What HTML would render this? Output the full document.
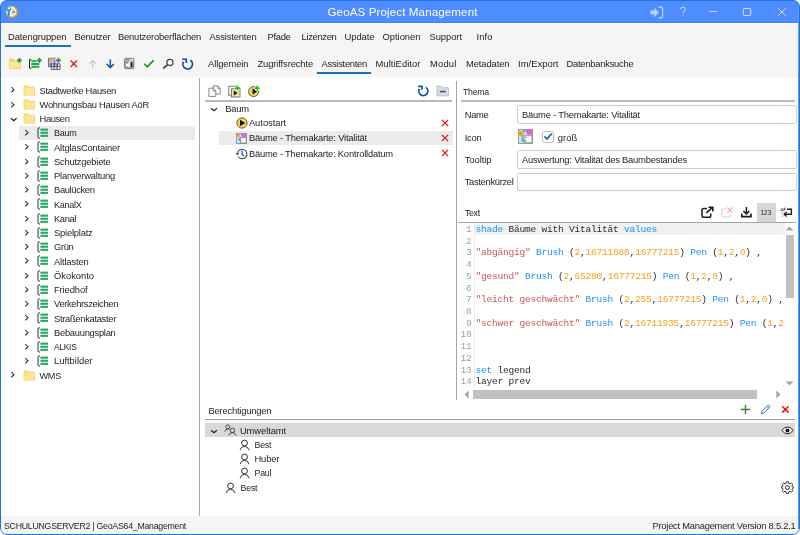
<!DOCTYPE html>
<html><head><meta charset="utf-8"><title>GeoAS Project Management</title>
<style>
html,body{margin:0;padding:0;background:#fff;}
body{width:800px;height:535px;overflow:hidden;position:relative;font-family:"Liberation Sans",sans-serif;}
#win{will-change:transform;position:absolute;left:0;top:0;width:800px;height:535px;border-radius:7px;background:#f5f5f5;overflow:hidden;}
#frame{position:absolute;left:0;top:0;width:798px;height:533px;border:1px solid #1f74dc;border-radius:7px;pointer-events:none;}
#title{position:absolute;left:0;top:0;width:800px;height:23px;background:#4f8cff;}
.a{position:absolute;display:block;}
.t{position:absolute;white-space:nowrap;line-height:16px;height:16px;font-family:"Liberation Sans",sans-serif;}
.p{position:absolute;background:#fff;}
.ln{position:absolute;background:#bdbdbd;}
.inp{position:absolute;left:517px;width:278px;height:16.5px;border:1px solid #cdcdcd;border-radius:1.5px;background:#fff;}
#code{position:absolute;left:458px;top:222px;width:340px;height:178px;background:#fff;font-family:"Liberation Mono",monospace;font-size:9.5px;letter-spacing:-0.2px;overflow:hidden;}
#code .r{position:absolute;left:0;width:327px;height:11.7px;line-height:11.7px;white-space:pre;}
#code .n{position:absolute;left:0;width:13.5px;text-align:right;color:#a2a2a2;}
#code .c{position:absolute;left:17.5px;color:#2b2b2b;}
.k{color:#1e8ff8}.s{color:#c9575d}.o{color:#f4a11c}
</style></head><body>
<div id="win">
<div id="title"></div>
<div class="a" style="left:0;top:22px;width:800px;height:1px;background:#3d84f4"></div>
<div class="a" style="left:0;top:23px;width:800px;height:1px;background:#fcfcfc"></div>
<!-- panels -->
<div class="p" style="left:1px;top:77px;width:797px;height:439px"></div>
<div class="ln" style="left:199px;top:78px;width:1px;height:438px;background:#a6a6a6"></div>
<div class="ln" style="left:456px;top:81px;width:1px;height:319px;background:#a6a6a6"></div>
<!-- selection bars -->
<div class="a" style="left:19px;top:126px;width:176px;height:14px;background:#ebebeb"></div>
<div class="a" style="left:219px;top:131px;width:233.5px;height:14px;background:#ebebeb"></div>
<div class="a" style="left:205px;top:423px;width:590px;height:14px;background:#d9d9d9"></div>
<!-- lines -->
<div class="ln" style="left:4.5px;top:45px;width:66px;height:1.6px;background:#1873b8"></div>
<div class="ln" style="left:317px;top:72px;width:54px;height:1.6px;background:#1873b8"></div>
<div class="ln" style="left:205px;top:100px;width:247px;height:1.8px;background:#b9b9b9"></div>
<div class="ln" style="left:461px;top:100px;width:334px;height:1.8px;background:#b9b9b9"></div>
<div class="ln" style="left:205px;top:418.9px;width:590px;height:1.3px;background:#a4a4a4"></div>
<!-- inputs -->
<div class="inp" style="top:105px"></div>
<div class="inp" style="top:150px"></div>
<div class="inp" style="top:172.5px"></div>
<svg class="a" style="left:9.8px;top:86.39999999999999px" width="6" height="8" viewBox="0 0 6 8"><path d="M1.3 1 L4 3.7 L1.3 6.4" fill="none" stroke="#262626" stroke-width="1.05"/></svg>
<svg class="a" style="left:23px;top:84.7px" width="13" height="11" viewBox="0 0 13 11"><path d="M0.6 1 Q0.6 0.4 1.2 0.4 H5 Q5.5 0.4 5.8 0.9 L6.3 1.8 H11.4 Q12 1.8 12 2.4 V10 Q12 10.6 11.4 10.6 H1.2 Q0.6 10.6 0.6 10 Z" fill="#f4d262"/><path d="M1.4 2.6 H11.2 V9.8 H1.4 Z" fill="#fce795"/><path d="M1.2 1.2 H5 V2 H1.2 Z" fill="#f9df82"/></svg>
<svg class="a" style="left:9.8px;top:100.64999999999999px" width="6" height="8" viewBox="0 0 6 8"><path d="M1.3 1 L4 3.7 L1.3 6.4" fill="none" stroke="#262626" stroke-width="1.05"/></svg>
<svg class="a" style="left:23px;top:98.95px" width="13" height="11" viewBox="0 0 13 11"><path d="M0.6 1 Q0.6 0.4 1.2 0.4 H5 Q5.5 0.4 5.8 0.9 L6.3 1.8 H11.4 Q12 1.8 12 2.4 V10 Q12 10.6 11.4 10.6 H1.2 Q0.6 10.6 0.6 10 Z" fill="#f4d262"/><path d="M1.4 2.6 H11.2 V9.8 H1.4 Z" fill="#fce795"/><path d="M1.2 1.2 H5 V2 H1.2 Z" fill="#f9df82"/></svg>
<svg class="a" style="left:9.6px;top:117.0px" width="8" height="6" viewBox="0 0 8 6"><path d="M1 1.2 L3.8 3.7 L6.6 1.2" fill="none" stroke="#1c1c1c" stroke-width="1.15"/></svg>
<svg class="a" style="left:23px;top:113.2px" width="13" height="11" viewBox="0 0 13 11"><path d="M0.6 1 Q0.6 0.4 1.2 0.4 H5 Q5.5 0.4 5.8 0.9 L6.3 1.8 H11.4 Q12 1.8 12 2.4 V10 Q12 10.6 11.4 10.6 H1.2 Q0.6 10.6 0.6 10 Z" fill="#f4d262"/><path d="M1.4 2.6 H11.2 V9.8 H1.4 Z" fill="#fce795"/><path d="M1.2 1.2 H5 V2 H1.2 Z" fill="#f9df82"/></svg>
<svg class="a" style="left:24.0px;top:129.15px" width="6" height="8" viewBox="0 0 6 8"><path d="M1.3 1 L4 3.7 L1.3 6.4" fill="none" stroke="#262626" stroke-width="1.05"/></svg>
<svg class="a" style="left:37.2px;top:127.05000000000001px" width="12" height="12" viewBox="0 0 12 12"><path d="M3 0.9 H2 Q1 0.9 1 1.9 V10 Q1 11 2 11 H3" fill="none" stroke="#333" stroke-width="1"/><rect x="3.4" y="1.6" width="7.6" height="2.1" fill="#25a868"/><rect x="3.4" y="4.7" width="7.6" height="2.1" fill="#25a868"/><rect x="3.4" y="7.8" width="7.6" height="2.1" fill="#25a868"/></svg>
<svg class="a" style="left:24.0px;top:143.4px" width="6" height="8" viewBox="0 0 6 8"><path d="M1.3 1 L4 3.7 L1.3 6.4" fill="none" stroke="#262626" stroke-width="1.05"/></svg>
<svg class="a" style="left:37.2px;top:141.3px" width="12" height="12" viewBox="0 0 12 12"><path d="M3 0.9 H2 Q1 0.9 1 1.9 V10 Q1 11 2 11 H3" fill="none" stroke="#333" stroke-width="1"/><rect x="3.4" y="1.6" width="7.6" height="2.1" fill="#25a868"/><rect x="3.4" y="4.7" width="7.6" height="2.1" fill="#25a868"/><rect x="3.4" y="7.8" width="7.6" height="2.1" fill="#25a868"/></svg>
<svg class="a" style="left:24.0px;top:157.65px" width="6" height="8" viewBox="0 0 6 8"><path d="M1.3 1 L4 3.7 L1.3 6.4" fill="none" stroke="#262626" stroke-width="1.05"/></svg>
<svg class="a" style="left:37.2px;top:155.55px" width="12" height="12" viewBox="0 0 12 12"><path d="M3 0.9 H2 Q1 0.9 1 1.9 V10 Q1 11 2 11 H3" fill="none" stroke="#333" stroke-width="1"/><rect x="3.4" y="1.6" width="7.6" height="2.1" fill="#25a868"/><rect x="3.4" y="4.7" width="7.6" height="2.1" fill="#25a868"/><rect x="3.4" y="7.8" width="7.6" height="2.1" fill="#25a868"/></svg>
<svg class="a" style="left:24.0px;top:171.9px" width="6" height="8" viewBox="0 0 6 8"><path d="M1.3 1 L4 3.7 L1.3 6.4" fill="none" stroke="#262626" stroke-width="1.05"/></svg>
<svg class="a" style="left:37.2px;top:169.8px" width="12" height="12" viewBox="0 0 12 12"><path d="M3 0.9 H2 Q1 0.9 1 1.9 V10 Q1 11 2 11 H3" fill="none" stroke="#333" stroke-width="1"/><rect x="3.4" y="1.6" width="7.6" height="2.1" fill="#25a868"/><rect x="3.4" y="4.7" width="7.6" height="2.1" fill="#25a868"/><rect x="3.4" y="7.8" width="7.6" height="2.1" fill="#25a868"/></svg>
<svg class="a" style="left:24.0px;top:186.15px" width="6" height="8" viewBox="0 0 6 8"><path d="M1.3 1 L4 3.7 L1.3 6.4" fill="none" stroke="#262626" stroke-width="1.05"/></svg>
<svg class="a" style="left:37.2px;top:184.05px" width="12" height="12" viewBox="0 0 12 12"><path d="M3 0.9 H2 Q1 0.9 1 1.9 V10 Q1 11 2 11 H3" fill="none" stroke="#333" stroke-width="1"/><rect x="3.4" y="1.6" width="7.6" height="2.1" fill="#25a868"/><rect x="3.4" y="4.7" width="7.6" height="2.1" fill="#25a868"/><rect x="3.4" y="7.8" width="7.6" height="2.1" fill="#25a868"/></svg>
<svg class="a" style="left:24.0px;top:200.4px" width="6" height="8" viewBox="0 0 6 8"><path d="M1.3 1 L4 3.7 L1.3 6.4" fill="none" stroke="#262626" stroke-width="1.05"/></svg>
<svg class="a" style="left:37.2px;top:198.3px" width="12" height="12" viewBox="0 0 12 12"><path d="M3 0.9 H2 Q1 0.9 1 1.9 V10 Q1 11 2 11 H3" fill="none" stroke="#333" stroke-width="1"/><rect x="3.4" y="1.6" width="7.6" height="2.1" fill="#25a868"/><rect x="3.4" y="4.7" width="7.6" height="2.1" fill="#25a868"/><rect x="3.4" y="7.8" width="7.6" height="2.1" fill="#25a868"/></svg>
<svg class="a" style="left:24.0px;top:214.65px" width="6" height="8" viewBox="0 0 6 8"><path d="M1.3 1 L4 3.7 L1.3 6.4" fill="none" stroke="#262626" stroke-width="1.05"/></svg>
<svg class="a" style="left:37.2px;top:212.55px" width="12" height="12" viewBox="0 0 12 12"><path d="M3 0.9 H2 Q1 0.9 1 1.9 V10 Q1 11 2 11 H3" fill="none" stroke="#333" stroke-width="1"/><rect x="3.4" y="1.6" width="7.6" height="2.1" fill="#25a868"/><rect x="3.4" y="4.7" width="7.6" height="2.1" fill="#25a868"/><rect x="3.4" y="7.8" width="7.6" height="2.1" fill="#25a868"/></svg>
<svg class="a" style="left:24.0px;top:228.9px" width="6" height="8" viewBox="0 0 6 8"><path d="M1.3 1 L4 3.7 L1.3 6.4" fill="none" stroke="#262626" stroke-width="1.05"/></svg>
<svg class="a" style="left:37.2px;top:226.8px" width="12" height="12" viewBox="0 0 12 12"><path d="M3 0.9 H2 Q1 0.9 1 1.9 V10 Q1 11 2 11 H3" fill="none" stroke="#333" stroke-width="1"/><rect x="3.4" y="1.6" width="7.6" height="2.1" fill="#25a868"/><rect x="3.4" y="4.7" width="7.6" height="2.1" fill="#25a868"/><rect x="3.4" y="7.8" width="7.6" height="2.1" fill="#25a868"/></svg>
<svg class="a" style="left:24.0px;top:243.15px" width="6" height="8" viewBox="0 0 6 8"><path d="M1.3 1 L4 3.7 L1.3 6.4" fill="none" stroke="#262626" stroke-width="1.05"/></svg>
<svg class="a" style="left:37.2px;top:241.05px" width="12" height="12" viewBox="0 0 12 12"><path d="M3 0.9 H2 Q1 0.9 1 1.9 V10 Q1 11 2 11 H3" fill="none" stroke="#333" stroke-width="1"/><rect x="3.4" y="1.6" width="7.6" height="2.1" fill="#25a868"/><rect x="3.4" y="4.7" width="7.6" height="2.1" fill="#25a868"/><rect x="3.4" y="7.8" width="7.6" height="2.1" fill="#25a868"/></svg>
<svg class="a" style="left:24.0px;top:257.40000000000003px" width="6" height="8" viewBox="0 0 6 8"><path d="M1.3 1 L4 3.7 L1.3 6.4" fill="none" stroke="#262626" stroke-width="1.05"/></svg>
<svg class="a" style="left:37.2px;top:255.3px" width="12" height="12" viewBox="0 0 12 12"><path d="M3 0.9 H2 Q1 0.9 1 1.9 V10 Q1 11 2 11 H3" fill="none" stroke="#333" stroke-width="1"/><rect x="3.4" y="1.6" width="7.6" height="2.1" fill="#25a868"/><rect x="3.4" y="4.7" width="7.6" height="2.1" fill="#25a868"/><rect x="3.4" y="7.8" width="7.6" height="2.1" fill="#25a868"/></svg>
<svg class="a" style="left:24.0px;top:271.65000000000003px" width="6" height="8" viewBox="0 0 6 8"><path d="M1.3 1 L4 3.7 L1.3 6.4" fill="none" stroke="#262626" stroke-width="1.05"/></svg>
<svg class="a" style="left:37.2px;top:269.55px" width="12" height="12" viewBox="0 0 12 12"><path d="M3 0.9 H2 Q1 0.9 1 1.9 V10 Q1 11 2 11 H3" fill="none" stroke="#333" stroke-width="1"/><rect x="3.4" y="1.6" width="7.6" height="2.1" fill="#25a868"/><rect x="3.4" y="4.7" width="7.6" height="2.1" fill="#25a868"/><rect x="3.4" y="7.8" width="7.6" height="2.1" fill="#25a868"/></svg>
<svg class="a" style="left:24.0px;top:285.90000000000003px" width="6" height="8" viewBox="0 0 6 8"><path d="M1.3 1 L4 3.7 L1.3 6.4" fill="none" stroke="#262626" stroke-width="1.05"/></svg>
<svg class="a" style="left:37.2px;top:283.8px" width="12" height="12" viewBox="0 0 12 12"><path d="M3 0.9 H2 Q1 0.9 1 1.9 V10 Q1 11 2 11 H3" fill="none" stroke="#333" stroke-width="1"/><rect x="3.4" y="1.6" width="7.6" height="2.1" fill="#25a868"/><rect x="3.4" y="4.7" width="7.6" height="2.1" fill="#25a868"/><rect x="3.4" y="7.8" width="7.6" height="2.1" fill="#25a868"/></svg>
<svg class="a" style="left:24.0px;top:300.15000000000003px" width="6" height="8" viewBox="0 0 6 8"><path d="M1.3 1 L4 3.7 L1.3 6.4" fill="none" stroke="#262626" stroke-width="1.05"/></svg>
<svg class="a" style="left:37.2px;top:298.05px" width="12" height="12" viewBox="0 0 12 12"><path d="M3 0.9 H2 Q1 0.9 1 1.9 V10 Q1 11 2 11 H3" fill="none" stroke="#333" stroke-width="1"/><rect x="3.4" y="1.6" width="7.6" height="2.1" fill="#25a868"/><rect x="3.4" y="4.7" width="7.6" height="2.1" fill="#25a868"/><rect x="3.4" y="7.8" width="7.6" height="2.1" fill="#25a868"/></svg>
<svg class="a" style="left:24.0px;top:314.40000000000003px" width="6" height="8" viewBox="0 0 6 8"><path d="M1.3 1 L4 3.7 L1.3 6.4" fill="none" stroke="#262626" stroke-width="1.05"/></svg>
<svg class="a" style="left:37.2px;top:312.3px" width="12" height="12" viewBox="0 0 12 12"><path d="M3 0.9 H2 Q1 0.9 1 1.9 V10 Q1 11 2 11 H3" fill="none" stroke="#333" stroke-width="1"/><rect x="3.4" y="1.6" width="7.6" height="2.1" fill="#25a868"/><rect x="3.4" y="4.7" width="7.6" height="2.1" fill="#25a868"/><rect x="3.4" y="7.8" width="7.6" height="2.1" fill="#25a868"/></svg>
<svg class="a" style="left:24.0px;top:328.65000000000003px" width="6" height="8" viewBox="0 0 6 8"><path d="M1.3 1 L4 3.7 L1.3 6.4" fill="none" stroke="#262626" stroke-width="1.05"/></svg>
<svg class="a" style="left:37.2px;top:326.55px" width="12" height="12" viewBox="0 0 12 12"><path d="M3 0.9 H2 Q1 0.9 1 1.9 V10 Q1 11 2 11 H3" fill="none" stroke="#333" stroke-width="1"/><rect x="3.4" y="1.6" width="7.6" height="2.1" fill="#25a868"/><rect x="3.4" y="4.7" width="7.6" height="2.1" fill="#25a868"/><rect x="3.4" y="7.8" width="7.6" height="2.1" fill="#25a868"/></svg>
<svg class="a" style="left:24.0px;top:342.90000000000003px" width="6" height="8" viewBox="0 0 6 8"><path d="M1.3 1 L4 3.7 L1.3 6.4" fill="none" stroke="#262626" stroke-width="1.05"/></svg>
<svg class="a" style="left:37.2px;top:340.8px" width="12" height="12" viewBox="0 0 12 12"><path d="M3 0.9 H2 Q1 0.9 1 1.9 V10 Q1 11 2 11 H3" fill="none" stroke="#333" stroke-width="1"/><rect x="3.4" y="1.6" width="7.6" height="2.1" fill="#25a868"/><rect x="3.4" y="4.7" width="7.6" height="2.1" fill="#25a868"/><rect x="3.4" y="7.8" width="7.6" height="2.1" fill="#25a868"/></svg>
<svg class="a" style="left:24.0px;top:357.15000000000003px" width="6" height="8" viewBox="0 0 6 8"><path d="M1.3 1 L4 3.7 L1.3 6.4" fill="none" stroke="#262626" stroke-width="1.05"/></svg>
<svg class="a" style="left:37.2px;top:355.05px" width="12" height="12" viewBox="0 0 12 12"><path d="M3 0.9 H2 Q1 0.9 1 1.9 V10 Q1 11 2 11 H3" fill="none" stroke="#333" stroke-width="1"/><rect x="3.4" y="1.6" width="7.6" height="2.1" fill="#25a868"/><rect x="3.4" y="4.7" width="7.6" height="2.1" fill="#25a868"/><rect x="3.4" y="7.8" width="7.6" height="2.1" fill="#25a868"/></svg>
<svg class="a" style="left:9.8px;top:371.40000000000003px" width="6" height="8" viewBox="0 0 6 8"><path d="M1.3 1 L4 3.7 L1.3 6.4" fill="none" stroke="#262626" stroke-width="1.05"/></svg>
<svg class="a" style="left:23px;top:369.7px" width="13" height="11" viewBox="0 0 13 11"><path d="M0.6 1 Q0.6 0.4 1.2 0.4 H5 Q5.5 0.4 5.8 0.9 L6.3 1.8 H11.4 Q12 1.8 12 2.4 V10 Q12 10.6 11.4 10.6 H1.2 Q0.6 10.6 0.6 10 Z" fill="#f4d262"/><path d="M1.4 2.6 H11.2 V9.8 H1.4 Z" fill="#fce795"/><path d="M1.2 1.2 H5 V2 H1.2 Z" fill="#f9df82"/></svg>
<!-- title bar icons -->
<svg class="a" style="left:5.3px;top:5.3px" width="13.6" height="13.6" viewBox="0 0 15 15"><circle cx="7.5" cy="7.5" r="6.7" fill="#f6a91a"/><circle cx="6.9" cy="7.3" r="5.3" fill="#fff"/><path d="M1.4 2.4 V4.8 Q1.4 6.6 3 7.1 V11.6 Q3 12.7 4.1 12.7 Q5.2 12.7 5.2 11.6 V7.1 Q6.8 6.6 6.8 4.8 V2.4 H5.4 V4.6 H2.8 V2.4 Z" fill="#1a95d8"/><path d="M8.2 4.6 L9.6 5.8 M7.6 7.6 H10.8 L9.4 9 M8 9.8 L9 10.6" stroke="#274f9c" stroke-width="1.1" fill="none"/></svg>
<svg class="a" style="left:650.3px;top:5.6px" width="14" height="13" viewBox="0 0 14 13"><path d="M0.5 4.6 H4.4 V1.8 L9 6.5 L4.4 11.2 V8.4 H0.5 Z" fill="#b4d0ff"/><path d="M8.6 1 H10.6 Q12.6 1 12.6 3 V10 Q12.6 12 10.6 12 H8.6" fill="none" stroke="#b4d0ff" stroke-width="1.3"/></svg>
<svg class="a" style="left:679px;top:6px" width="8" height="12" viewBox="0 0 8 12"><path d="M1.6 3.4 Q1.6 1.2 4 1.2 Q6.3 1.2 6.3 3.3 Q6.3 4.6 5 5.4 Q4 6 4 7.6" fill="none" stroke="#b9d3ff" stroke-width="1.1"/><rect x="3.4" y="9" width="1.2" height="1.4" fill="#b9d3ff"/></svg>
<svg class="a" style="left:708px;top:10px" width="10" height="3" viewBox="0 0 10 3"><rect x="1" y="1" width="8" height="1" fill="#c4daff"/></svg>
<svg class="a" style="left:742px;top:7px" width="10" height="10" viewBox="0 0 10 10"><rect x="1.3" y="1.5" width="7.4" height="7" rx="0.8" fill="none" stroke="#cfe0ff" stroke-width="1"/></svg>
<svg class="a" style="left:777px;top:7px" width="10" height="10" viewBox="0 0 10 10"><path d="M1.2 1.4 L8.6 8.8 M8.6 1.4 L1.2 8.8" stroke="#e4eeff" stroke-width="0.9"/></svg>

<!-- main toolbar -->
<svg class="a" style="left:8px;top:57px" width="15" height="13" viewBox="0 0 15 13"><path d="M1 2.4 Q1 1.7 1.7 1.7 H5.6 L6.6 3.2 H12.2 Q13 3.2 13 3.9 V11.2 Q13 12 12.2 12 H1.8 Q1 12 1 11.2 Z" fill="#f0cf62"/><path d="M1.7 4.2 H12.3 V11.3 H1.7 Z" fill="#fbe692"/><path d="M8 1 H14.6 V6.6 Z" fill="#f5f5f5"/><path d="M11.4 0.9 V5.7 M9 3.3 H13.8" stroke="#1d9440" stroke-width="1.7"/></svg>
<svg class="a" style="left:28px;top:57px" width="15" height="13" viewBox="0 0 15 13"><path d="M3.2 2.6 H2.4 Q1.5 2.6 1.5 3.5 V10.6 Q1.5 11.5 2.4 11.5 H3.2" fill="none" stroke="#2c2c2c" stroke-width="1.1"/><rect x="3.3" y="3.2" width="8" height="7.6" fill="#e9f0c8"/><rect x="3.3" y="3.2" width="8" height="2" fill="#22a85e"/><rect x="3.3" y="6" width="8" height="2" fill="#22a85e"/><rect x="3.3" y="8.8" width="8" height="2" fill="#22a85e"/><path d="M8.4 1 H14.6 V6 H8.4 Z" fill="#f5f5f5" opacity="0.85"/><path d="M11.4 0.9 V5.7 M9 3.3 H13.8" stroke="#1d9440" stroke-width="1.7"/></svg>
<svg class="a" style="left:47px;top:57px" width="15" height="13" viewBox="0 0 15 13"><rect x="1.6" y="1.2" width="9" height="8.6" fill="#bfe6f4" stroke="#5a5a5a" stroke-width="0.8"/><rect x="2" y="1.6" width="3" height="3.2" fill="#f7a23a"/><rect x="2.2" y="5.6" width="2.6" height="3.6" fill="#4eb0ee"/><rect x="5.2" y="1.6" width="2.2" height="2" fill="#7fd88a"/><path d="M7.4 2 L9.8 5.2 H8.4 V8.4 H6.6 V5.2 H5.2 Z" fill="#f45cf0"/><rect x="4.2" y="9.6" width="8.8" height="2.8" fill="#fafafa"/><path d="M4.2 6.8 H13 V12.4 H4.2 Z M4.2 9.6 H13 M7.1 6.8 V12.4 M10 6.8 V12.4" fill="none" stroke="#3a3a3a" stroke-width="0.8"/><rect x="8.8" y="0.4" width="5.6" height="5.8" fill="#f5f5f5"/><path d="M11.4 0.9 V5.7 M9 3.3 H13.8" stroke="#1d9440" stroke-width="1.7"/></svg>
<svg class="a" style="left:69px;top:59px" width="10" height="10" viewBox="0 0 10 10"><path d="M1.6 1.6 L8 8 M8 1.6 L1.6 8" stroke="#e01b1b" stroke-width="1.4"/></svg>
<svg class="a" style="left:88px;top:59px" width="10" height="10" viewBox="0 0 10 10"><path d="M4.7 9 V1.6 M1.4 4.6 L4.7 1.4 L8 4.6" fill="none" stroke="#a9c9ea" stroke-width="1.1"/></svg>
<svg class="a" style="left:105px;top:59px" width="11" height="10" viewBox="0 0 11 10"><path d="M5.3 0.6 V8.4 M1.7 5 L5.3 8.6 L8.9 5" fill="none" stroke="#0d57b2" stroke-width="1.55"/></svg>
<svg class="a" style="left:123px;top:57px" width="13" height="13" viewBox="0 0 13 13"><rect x="1.6" y="1.4" width="9.2" height="10.2" rx="1.2" fill="#a2a2a2" stroke="#6e6e6e" stroke-width="0.9"/><rect x="2.9" y="6.8" width="2" height="2.6" fill="#fff"/><rect x="5.3" y="5.6" width="1.7" height="4.4" fill="#fff"/><rect x="7.8" y="5.6" width="1.5" height="4.4" fill="#111"/><path d="M5.6 5 L9.2 2.6 M7.4 2.4 H9.6 V4.4" stroke="#f2f2f2" stroke-width="1" fill="none"/><path d="M2.6 2.6 V4.6" stroke="#c8c8c8" stroke-width="0.7"/></svg>
<svg class="a" style="left:143px;top:59px" width="12" height="10" viewBox="0 0 12 10"><path d="M1.2 4.8 L4.3 7.8 L10.6 1.4" fill="none" stroke="#1f8c1f" stroke-width="1.6"/></svg>
<svg class="a" style="left:162px;top:58px" width="13" height="12" viewBox="0 0 13 12"><circle cx="7.9" cy="4.4" r="3.1" fill="none" stroke="#4c4c4c" stroke-width="1.3"/><path d="M5.5 6.8 L1.8 10" stroke="#4c4c4c" stroke-width="1.8" stroke-linecap="round"/></svg>
<svg class="a" style="left:181px;top:58px" width="13" height="13" viewBox="0 0 13 13"><path d="M9.4 2.2 A4.8 4.8 0 1 1 2.5 3.8" fill="none" stroke="#0c4ca6" stroke-width="1.75"/><path d="M1.2 1.3 H5.3 V4.9" fill="none" stroke="#0c4ca6" stroke-width="1.6"/></svg>
<!-- middle panel toolbar -->
<svg class="a" style="left:208px;top:85px" width="13" height="12" viewBox="0 0 13 12"><path d="M5.4 0.8 H9.8 L12.2 3.2 V9 H5.4 Z" fill="#fff" stroke="#7a7a7a" stroke-width="0.9"/><path d="M9.6 0.8 V3.4 H12.2" fill="none" stroke="#7a7a7a" stroke-width="0.8"/><path d="M0.9 3.2 H5.2 L7.8 5.8 V11.4 H0.9 Z" fill="#fff" stroke="#7a7a7a" stroke-width="0.9"/><path d="M5 3.2 V6 H7.8" fill="none" stroke="#7a7a7a" stroke-width="0.8"/></svg>
<svg class="a" style="left:228px;top:84.6px" width="14" height="13" viewBox="0 0 14 13"><rect x="0.8" y="1.2" width="7.4" height="9" fill="#fff" stroke="#6a6a6a" stroke-width="0.9"/><rect x="3.4" y="3.8" width="8.6" height="8.2" fill="#f3e3a0" stroke="#6a6a6a" stroke-width="0.9"/><path d="M5.8 5.6 L9.6 8 L5.8 10.4 Z" fill="#111"/><path d="M9.4 0.4 V5.8 M6.7 3.1 H12.1" stroke="#fff" stroke-width="3"/><path d="M9.4 0.6 V5.6 M6.9 3.1 H11.9" stroke="#1fbe24" stroke-width="1.6"/></svg>
<svg class="a" style="left:248px;top:84.6px" width="14" height="13" viewBox="0 0 14 13"><circle cx="5.6" cy="6.6" r="5" fill="#f1d268" stroke="#5a4f22" stroke-width="0.9"/><path d="M4.6 3.4 L9 6.6 L4.6 9.6 Z" fill="#111"/><path d="M9.2 0.4 V5.8 M6.5 3.1 H11.9" stroke="#fff" stroke-width="3"/><path d="M9.2 0.6 V5.6 M6.7 3.1 H11.7" stroke="#1fbe24" stroke-width="1.6"/></svg>
<svg class="a" style="left:417px;top:85px" width="13" height="12" viewBox="0 0 13 12"><path d="M8.9 2.4 A4.5 4.5 0 1 1 2.4 3.9" fill="none" stroke="#0c4ca6" stroke-width="1.7"/><path d="M1.2 1.4 H5 V4.8" fill="none" stroke="#0c4ca6" stroke-width="1.6"/></svg>
<svg class="a" style="left:436px;top:85px" width="14" height="12" viewBox="0 0 14 12"><path d="M1 1.2 H5.2 L6.4 2.8 H12.6 V10.8 H1 Z" fill="#dcdcdc" stroke="#b4b4b4" stroke-width="0.8"/><rect x="3.8" y="5.8" width="6" height="1.6" fill="#1b5fc0"/></svg>
<!-- middle tree -->
<svg class="a" style="left:209.8px;top:107px" width="8" height="6" viewBox="0 0 8 6"><path d="M1.1 1.2 L4 3.7 L6.9 1.2" fill="none" stroke="#1c1c1c" stroke-width="1.15"/></svg>
<svg class="a" style="left:235.5px;top:117px" width="12" height="12" viewBox="0 0 12 12"><circle cx="6" cy="6" r="5.1" fill="#f6d55c" stroke="#6a5c22" stroke-width="1"/><path d="M4 2.8 L9.2 6 L4 9.2 Z" fill="#0c0c0c"/></svg>
<svg class="a" style="left:236px;top:133px" width="11" height="11" viewBox="0 0 11 11"><rect x="0.4" y="0.4" width="10.2" height="10.2" fill="#bfe8f2" stroke="#888" stroke-width="0.8"/><path d="M0.8 0.8 H4 L3 5 L1.6 3.4 Z" fill="#f59a23"/><path d="M5 0.8 H10.2 V4 L6 4.4 Z" fill="#f05ae0"/><rect x="2.6" y="5" width="1.6" height="3" fill="#4aa8e8"/><rect x="4.6" y="4.6" width="5.6" height="5.4" fill="#e6e6e6" stroke="#777" stroke-width="0.6"/><path d="M5.6 6.4 H9.2 M5.6 8.2 H9.2" stroke="#fff" stroke-width="0.9"/></svg>
<svg class="a" style="left:235px;top:147.5px" width="13" height="12" viewBox="0 0 13 12"><circle cx="7.2" cy="6" r="4.7" fill="#fff" stroke="#505050" stroke-width="1.2"/><path d="M7 2.8 V6.2 L9.2 8.2" fill="none" stroke="#2a5ff0" stroke-width="1.4"/><rect x="1" y="6.6" width="2.6" height="2.4" fill="#fff"/><path d="M1 5 L2.4 6.8 L4.2 5.4" fill="none" stroke="#505050" stroke-width="1"/></svg>
<svg class="a" style="left:441px;top:119px" width="8" height="8" viewBox="0 0 8 8"><path d="M0.9 0.9 L7.1 7.1 M7.1 0.9 L0.9 7.1" stroke="#e01414" stroke-width="1.3"/></svg>
<svg class="a" style="left:441px;top:134px" width="8" height="8" viewBox="0 0 8 8"><path d="M0.9 0.9 L7.1 7.1 M7.1 0.9 L0.9 7.1" stroke="#e01414" stroke-width="1.3"/></svg>
<svg class="a" style="left:441px;top:149px" width="8" height="8" viewBox="0 0 8 8"><path d="M0.9 0.9 L7.1 7.1 M7.1 0.9 L0.9 7.1" stroke="#e01414" stroke-width="1.3"/></svg>
<!-- right panel: icon image + checkbox -->
<svg class="a" style="left:517.7px;top:129.2px" width="15" height="15" viewBox="0 0 15 15"><rect x="0.4" y="0.4" width="14" height="14" fill="#c4ecf2" stroke="#8a8a8a" stroke-width="0.8"/><path d="M0.8 2.6 L3.4 2 L5.6 4.6 L4.2 9 L2.4 6.4 L0.8 6.2 Z" fill="#f7961e"/><path d="M4.6 1 L7.6 1.4 L6.6 3.6 L4.8 3 Z" fill="#3fbf62"/><path d="M7.6 0.8 H14 V5.4 L9.8 5.8 L8 3.4 Z" fill="#ee5ae0"/><rect x="3.6" y="8.4" width="2" height="4.4" fill="#4aa8e8"/><rect x="6" y="6.2" width="8" height="7.6" fill="#ececec" stroke="#808080" stroke-width="0.7"/><rect x="6.6" y="7.2" width="1.6" height="1.6" fill="#ee5ae0"/><rect x="6.6" y="11" width="1.6" height="1.6" fill="#3fbf62"/><path d="M8.8 8.2 H13 M8.8 10.2 H13 M8.8 12.2 H13" stroke="#fff" stroke-width="1.1"/></svg>
<div class="a" style="left:542px;top:130.5px;width:10px;height:10px;border:1px solid #bdbdbd;border-radius:2.5px;background:#fff"></div>
<svg class="a" style="left:543px;top:132px" width="10" height="9" viewBox="0 0 10 9"><path d="M1.4 4.4 L3.9 6.9 L8.8 1.6" fill="none" stroke="#1a6cb0" stroke-width="1.7"/></svg>
<!-- text toolbar -->
<div class="a" style="left:756.5px;top:202.5px;width:19.5px;height:20px;background:#d6d6d6"></div>
<svg class="a" style="left:700px;top:206px" width="15" height="13" viewBox="0 0 15 13"><path d="M7 2.4 H3.8 Q2 2.4 2 4.2 V9.4 Q2 11.2 3.8 11.2 H9 Q10.8 11.2 10.8 9.4 V7.4" fill="none" stroke="#1c1c1c" stroke-width="1.5"/><path d="M6.4 6.8 L12.2 1.6 M8.6 1.2 H12.8 V5.4" fill="none" stroke="#1c1c1c" stroke-width="1.6"/></svg>
<svg class="a" style="left:720px;top:206px" width="15" height="13" viewBox="0 0 15 13"><path d="M6.2 3 H3.4 Q2 3 2 4.4 V9.6 Q2 11 3.4 11 H8.6 Q10 11 10 9.6 V8" fill="none" stroke="#d6d6d6" stroke-width="1.2"/><path d="M7.4 1.4 L12.6 6.8 M12.6 1.4 L7.4 6.8" stroke="#f6a3ab" stroke-width="1.1"/></svg>
<svg class="a" style="left:740px;top:206px" width="13" height="13" viewBox="0 0 13 13"><path d="M6.4 1 V7.6 M3.4 5 L6.4 8 L9.4 5" fill="none" stroke="#1c1c1c" stroke-width="1.5"/><path d="M1.8 7.6 V10.6 H11 V7.6" fill="none" stroke="#1c1c1c" stroke-width="1.6"/></svg>
<div class="t" style="left:760.4px;top:204.8px;font-size:6.4px;color:#222;letter-spacing:0.1px">123</div>
<svg class="a" style="left:779.5px;top:207px" width="13" height="11" viewBox="0 0 13 11"><path d="M7 2.2 H11.4 V7.2 H4.6 M6.6 5 L4.2 7.2 L6.6 9.4" fill="none" stroke="#222" stroke-width="1.4"/><path d="M1 3.6 Q1 1.4 2.4 1.4 Q3.4 1.4 3.4 2.6 V3.6 H1.6 Q1 3.6 1 3 M4.6 0.6 V3.6 M4.6 2.4 Q5 1.6 5.8 1.8 M1.4 6.2 Q2 5.4 2.8 5.8 M1.6 8.8 Q2 9.6 2.8 9.2" fill="none" stroke="#333" stroke-width="0.7"/></svg>
<!-- bottom panel -->
<svg class="a" style="left:740.2px;top:404.2px" width="11" height="11" viewBox="0 0 11 11"><path d="M5.5 0.8 V10.2 M0.8 5.5 H10.2" stroke="#2e8b2e" stroke-width="1.4"/></svg>
<svg class="a" style="left:760px;top:404px" width="12" height="11" viewBox="0 0 12 11"><path d="M1.4 9.8 L2 7.2 L7.8 1.4 Q8.6 0.8 9.4 1.6 Q10.2 2.4 9.6 3.2 L3.8 9 Z M7 2.4 L8.8 4.2" fill="#fff" stroke="#2a6fc8" stroke-width="0.95"/></svg>
<svg class="a" style="left:781px;top:405.2px" width="9" height="9" viewBox="0 0 9 9"><path d="M1.2 1.2 L7.6 7.6 M7.6 1.2 L1.2 7.6" stroke="#e01414" stroke-width="1.5"/></svg>
<svg class="a" style="left:210.2px;top:428.6px" width="8" height="6" viewBox="0 0 8 6"><path d="M1.1 1.2 L4 3.7 L6.9 1.2" fill="none" stroke="#1c1c1c" stroke-width="1.15"/></svg>
<svg class="a" style="left:223.5px;top:424px" width="13" height="12" viewBox="0 0 13 12"><circle cx="3.8" cy="2.8" r="1.9" fill="none" stroke="#333" stroke-width="0.9"/><path d="M0.8 7.6 Q1.4 5 3.8 5 Q4.8 5 5.4 5.4" fill="none" stroke="#333" stroke-width="0.9"/><circle cx="8.4" cy="6.4" r="2.2" fill="none" stroke="#333" stroke-width="0.9"/><path d="M4.8 11.4 Q5.6 8.6 8.4 8.6 Q11.2 8.6 12 11.4" fill="none" stroke="#333" stroke-width="0.9"/></svg>
<svg class="a" style="left:780.5px;top:426px" width="13" height="9" viewBox="0 0 13 9"><path d="M0.8 4.4 Q3.4 1 6.5 1 Q9.6 1 12.2 4.4 Q9.6 7.8 6.5 7.8 Q3.4 7.8 0.8 4.4 Z" fill="#fff" stroke="#222" stroke-width="1"/><circle cx="6.5" cy="4.4" r="2" fill="#111"/></svg>
<svg class="a" style="left:780.5px;top:481px" width="13" height="13" viewBox="0 0 13 13"><path d="M5.5 0.8 H7.5 L7.9 2.4 L9 2.9 L10.4 2 L11.8 3.4 L10.9 4.8 L11.4 5.9 L13 6.3 V6.7 L11.4 7.5 L10.9 8.4 L11.8 9.8 L10.4 11.2 L9 10.3 L7.9 10.8 L7.5 12.4 H5.5 L5.1 10.8 L4 10.3 L2.6 11.2 L1.2 9.8 L2.1 8.4 L1.6 7.3 L0.2 6.9 V5.9 L1.6 5.7 L2.1 4.8 L1.2 3.4 L2.6 2 L4 2.9 L5.1 2.4 Z" fill="none" stroke="#2a2a2a" stroke-width="1" stroke-linejoin="round"/><circle cx="6.5" cy="6.6" r="1.9" fill="none" stroke="#2a2a2a" stroke-width="1"/></svg>
<svg class="a" style="left:238.8px;top:439px" width="11" height="12" viewBox="0 0 11 12"><circle cx="5.5" cy="4" r="2.9" fill="none" stroke="#333" stroke-width="1"/><path d="M1 11.2 Q1.8 7.4 5.5 7.4 Q9.2 7.4 10 11.2" fill="none" stroke="#333" stroke-width="1"/></svg>
<svg class="a" style="left:238.8px;top:453px" width="11" height="12" viewBox="0 0 11 12"><circle cx="5.5" cy="4" r="2.9" fill="none" stroke="#333" stroke-width="1"/><path d="M1 11.2 Q1.8 7.4 5.5 7.4 Q9.2 7.4 10 11.2" fill="none" stroke="#333" stroke-width="1"/></svg>
<svg class="a" style="left:238.8px;top:467px" width="11" height="12" viewBox="0 0 11 12"><circle cx="5.5" cy="4" r="2.9" fill="none" stroke="#333" stroke-width="1"/><path d="M1 11.2 Q1.8 7.4 5.5 7.4 Q9.2 7.4 10 11.2" fill="none" stroke="#333" stroke-width="1"/></svg>
<svg class="a" style="left:224.5px;top:481.8px" width="11" height="12" viewBox="0 0 11 12"><circle cx="5.5" cy="4" r="2.9" fill="none" stroke="#333" stroke-width="1"/><path d="M1 11.2 Q1.8 7.4 5.5 7.4 Q9.2 7.4 10 11.2" fill="none" stroke="#333" stroke-width="1"/></svg>

<div id="code">
<div class="a" style="left:0;top:0;width:338px;height:1px;background:#a8a8a8"></div>
<div class="a" style="left:15.6px;top:1px;width:1px;height:166px;background:#ececec"></div>
<div class="a" style="left:17px;top:1.2px;width:310px;height:11.8px;background:#f0f0f0"></div>
<div class="r" style="top:1.90px"><span class="n">1</span><span class="c"><span class="k">shade</span> Bäume with Vitalität <span class="k">values</span></span></div>
<div class="r" style="top:13.63px"><span class="n">2</span><span class="c"></span></div>
<div class="r" style="top:25.36px"><span class="n">3</span><span class="c"><span class="s">&quot;abgängig&quot;</span> <span class="k">Brush</span> (<span class="o">2</span>,<span class="o">16711680</span>,<span class="o">16777215</span>) <span class="k">Pen</span> (<span class="o">1</span>,<span class="o">2</span>,<span class="o">0</span>) ,</span></div>
<div class="r" style="top:37.09px"><span class="n">4</span><span class="c"></span></div>
<div class="r" style="top:48.82px"><span class="n">5</span><span class="c"><span class="s">&quot;gesund&quot;</span> <span class="k">Brush</span> (<span class="o">2</span>,<span class="o">65280</span>,<span class="o">16777215</span>) <span class="k">Pen</span> (<span class="o">1</span>,<span class="o">2</span>,<span class="o">0</span>) ,</span></div>
<div class="r" style="top:60.55px"><span class="n">6</span><span class="c"></span></div>
<div class="r" style="top:72.28px"><span class="n">7</span><span class="c"><span class="s">&quot;leicht geschwächt&quot;</span> <span class="k">Brush</span> (<span class="o">2</span>,<span class="o">255</span>,<span class="o">16777215</span>) <span class="k">Pen</span> (<span class="o">1</span>,<span class="o">2</span>,<span class="o">0</span>) ,</span></div>
<div class="r" style="top:84.01px"><span class="n">8</span><span class="c"></span></div>
<div class="r" style="top:95.74px"><span class="n">9</span><span class="c"><span class="s">&quot;schwer geschwächt&quot;</span> <span class="k">Brush</span> (<span class="o">2</span>,<span class="o">16711935</span>,<span class="o">16777215</span>) <span class="k">Pen</span> (<span class="o">1</span>,<span class="o">2</span>,<span class="o">0</span>) ,</span></div>
<div class="r" style="top:107.47px"><span class="n">10</span><span class="c"></span></div>
<div class="r" style="top:119.20px"><span class="n">11</span><span class="c"></span></div>
<div class="r" style="top:130.93px"><span class="n">12</span><span class="c"></span></div>
<div class="r" style="top:142.66px"><span class="n">13</span><span class="c"><span class="k">set</span> legend</span></div>
<div class="r" style="top:154.39px"><span class="n">14</span><span class="c">layer prev</span></div>
<div class="a" style="left:327px;top:1px;width:13px;height:177px;background:#fff"></div>
<svg class="a" style="left:327.4px;top:4px" width="9" height="5" viewBox="0 0 9 5"><path d="M0.5 4.5 L4.5 0.5 L8.5 4.5 Z" fill="#a3a3a3"/></svg>
<div class="a" style="left:327.8px;top:12.8px;width:8px;height:63.5px;background:#c1c1c1"></div>
<svg class="a" style="left:327.4px;top:158.5px" width="9" height="5" viewBox="0 0 9 5"><path d="M0.5 0.5 L4.5 4.5 L8.5 0.5 Z" fill="#a3a3a3"/></svg>
<div class="a" style="left:0;top:166px;width:340px;height:12px;background:#fff"></div>
<svg class="a" style="left:6.4px;top:168.4px" width="5" height="9" viewBox="0 0 5 9"><path d="M4.7 0.4 L0.4 4.4 L4.7 8.4 Z" fill="#a3a3a3"/></svg>
<div class="a" style="left:15px;top:168.2px;width:283.8px;height:8.4px;background:#c1c1c1"></div>
<svg class="a" style="left:318.2px;top:168.4px" width="5" height="9" viewBox="0 0 5 9"><path d="M0.3 0.4 L4.6 4.4 L0.3 8.4 Z" fill="#a3a3a3"/></svg>
</div>
<div class="t" id="t0" style="left:327.50px;top:3.90px;font-size:11.6px;letter-spacing:0.101px;color:#ffffff">GeoAS Project Management</div>
<div class="t" id="t1" style="left:8.00px;top:28.60px;font-size:9.4px;letter-spacing:-0.078px;color:#1e1e1e">Datengruppen</div>
<div class="t" id="t2" style="left:74.50px;top:28.60px;font-size:9.4px;letter-spacing:-0.191px;color:#1e1e1e">Benutzer</div>
<div class="t" id="t3" style="left:118.00px;top:28.60px;font-size:9.4px;letter-spacing:-0.186px;color:#1e1e1e">Benutzeroberflächen</div>
<div class="t" id="t4" style="left:209.50px;top:28.60px;font-size:9.4px;letter-spacing:-0.134px;color:#1e1e1e">Assistenten</div>
<div class="t" id="t5" style="left:267.50px;top:28.60px;font-size:9.4px;letter-spacing:-0.300px;color:#1e1e1e">Pfade</div>
<div class="t" id="t6" style="left:301.50px;top:28.60px;font-size:9.4px;letter-spacing:-0.316px;color:#1e1e1e">Lizenzen</div>
<div class="t" id="t7" style="left:344.50px;top:28.60px;font-size:9.4px;letter-spacing:-0.039px;color:#1e1e1e">Update</div>
<div class="t" id="t8" style="left:382.50px;top:28.60px;font-size:9.4px;letter-spacing:-0.008px;color:#1e1e1e">Optionen</div>
<div class="t" id="t9" style="left:429.50px;top:28.60px;font-size:9.4px;letter-spacing:-0.049px;color:#1e1e1e">Support</div>
<div class="t" id="t10" style="left:476.50px;top:28.60px;font-size:9.4px;letter-spacing:0.090px;color:#1e1e1e">Info</div>
<div class="t" id="t11" style="left:208.00px;top:56.10px;font-size:9.4px;letter-spacing:-0.075px;color:#1e1e1e">Allgemein</div>
<div class="t" id="t12" style="left:257.50px;top:56.10px;font-size:9.4px;letter-spacing:-0.118px;color:#1e1e1e">Zugriffsrechte</div>
<div class="t" id="t13" style="left:321.50px;top:56.10px;font-size:9.4px;letter-spacing:-0.270px;color:#1e1e1e">Assistenten</div>
<div class="t" id="t14" style="left:375.50px;top:56.10px;font-size:9.4px;letter-spacing:0.064px;color:#1e1e1e">MultiEditor</div>
<div class="t" id="t15" style="left:430.00px;top:56.10px;font-size:9.4px;letter-spacing:0.191px;color:#1e1e1e">Modul</div>
<div class="t" id="t16" style="left:466.00px;top:56.10px;font-size:9.4px;letter-spacing:-0.090px;color:#1e1e1e">Metadaten</div>
<div class="t" id="t17" style="left:518.00px;top:56.10px;font-size:9.4px;letter-spacing:0.042px;color:#1e1e1e">Im/Export</div>
<div class="t" id="t18" style="left:566.50px;top:56.10px;font-size:9.4px;letter-spacing:-0.241px;color:#1e1e1e">Datenbanksuche</div>
<div class="t" id="t19" style="left:39.50px;top:82.50px;font-size:9.4px;letter-spacing:-0.313px;color:#1e1e1e">Stadtwerke Hausen</div>
<div class="t" id="t20" style="left:39.50px;top:96.75px;font-size:9.4px;letter-spacing:-0.275px;color:#1e1e1e">Wohnungsbau Hausen AöR</div>
<div class="t" id="t21" style="left:39.50px;top:111.00px;font-size:9.4px;letter-spacing:-0.388px;color:#1e1e1e">Hausen</div>
<div class="t" id="t22" style="left:54.00px;top:125.25px;font-size:9.02px;letter-spacing:-0.266px;color:#1e1e1e">Baum</div>
<div class="t" id="t23" style="left:54.00px;top:139.50px;font-size:9.4px;letter-spacing:-0.175px;color:#1e1e1e">AltglasContainer</div>
<div class="t" id="t24" style="left:54.00px;top:153.75px;font-size:9.4px;letter-spacing:-0.225px;color:#1e1e1e">Schutzgebiete</div>
<div class="t" id="t25" style="left:54.00px;top:168.00px;font-size:9.4px;letter-spacing:-0.222px;color:#1e1e1e">Planverwaltung</div>
<div class="t" id="t26" style="left:54.00px;top:182.25px;font-size:9.4px;letter-spacing:-0.365px;color:#1e1e1e">Baulücken</div>
<div class="t" id="t27" style="left:54.00px;top:196.50px;font-size:9.02px;letter-spacing:-0.263px;color:#1e1e1e">KanalX</div>
<div class="t" id="t28" style="left:54.00px;top:210.75px;font-size:9.4px;letter-spacing:-0.397px;color:#1e1e1e">Kanal</div>
<div class="t" id="t29" style="left:54.00px;top:225.00px;font-size:9.4px;letter-spacing:-0.216px;color:#1e1e1e">Spielplatz</div>
<div class="t" id="t30" style="left:54.00px;top:239.25px;font-size:9.4px;letter-spacing:-0.336px;color:#1e1e1e">Grün</div>
<div class="t" id="t31" style="left:54.00px;top:253.50px;font-size:9.4px;letter-spacing:-0.163px;color:#1e1e1e">Altlasten</div>
<div class="t" id="t32" style="left:54.00px;top:267.75px;font-size:9.4px;letter-spacing:-0.018px;color:#1e1e1e">Ökokonto</div>
<div class="t" id="t33" style="left:54.00px;top:282.00px;font-size:9.4px;letter-spacing:-0.113px;color:#1e1e1e">Friedhof</div>
<div class="t" id="t34" style="left:54.00px;top:296.25px;font-size:9.4px;letter-spacing:-0.354px;color:#1e1e1e">Verkehrszeichen</div>
<div class="t" id="t35" style="left:54.00px;top:310.50px;font-size:9.4px;letter-spacing:-0.314px;color:#1e1e1e">Straßenkataster</div>
<div class="t" id="t36" style="left:54.00px;top:324.75px;font-size:9.4px;letter-spacing:-0.282px;color:#1e1e1e">Bebauungsplan</div>
<div class="t" id="t37" style="left:54.00px;top:339.00px;font-size:8.4px;letter-spacing:-0.250px;color:#1e1e1e">ALKIS</div>
<div class="t" id="t38" style="left:54.00px;top:353.25px;font-size:9.4px;letter-spacing:-0.008px;color:#1e1e1e">Luftbilder</div>
<div class="t" id="t39" style="left:39.50px;top:367.50px;font-size:9.12px;letter-spacing:-0.255px;color:#1e1e1e">WMS</div>
<div class="t" id="t40" style="left:225.20px;top:100.90px;font-size:9.4px;letter-spacing:-0.225px;color:#1e1e1e">Baum</div>
<div class="t" id="t41" style="left:248.90px;top:115.10px;font-size:9.4px;letter-spacing:-0.026px;color:#1e1e1e">Autostart</div>
<div class="t" id="t42" style="left:248.90px;top:130.30px;font-size:9.4px;letter-spacing:-0.192px;color:#1e1e1e">Bäume - Themakarte: Vitalität</div>
<div class="t" id="t43" style="left:248.90px;top:145.70px;font-size:9.4px;letter-spacing:-0.208px;color:#1e1e1e">Bäume - Themakarte: Kontrolldatum</div>
<div class="t" id="t44" style="left:463.00px;top:83.80px;font-size:8.78px;letter-spacing:-0.259px;color:#1e1e1e">Thema</div>
<div class="t" id="t45" style="left:464.70px;top:107.10px;font-size:9.4px;letter-spacing:-0.304px;color:#1e1e1e">Name</div>
<div class="t" id="t46" style="left:522.00px;top:107.10px;font-size:9.4px;letter-spacing:-0.196px;color:#1e1e1e">Bäume - Themakarte: Vitalität</div>
<div class="t" id="t47" style="left:464.70px;top:129.60px;font-size:9.4px;letter-spacing:-0.234px;color:#1e1e1e">Icon</div>
<div class="t" id="t48" style="left:557.80px;top:129.80px;font-size:9.4px;letter-spacing:0.055px;color:#1e1e1e">groß</div>
<div class="t" id="t49" style="left:464.70px;top:151.50px;font-size:9.4px;letter-spacing:-0.044px;color:#1e1e1e">Tooltip</div>
<div class="t" id="t50" style="left:522.00px;top:151.50px;font-size:9.4px;letter-spacing:-0.215px;color:#1e1e1e">Auswertung: Vitalität des Baumbestandes</div>
<div class="t" id="t51" style="left:464.70px;top:174.30px;font-size:9.4px;letter-spacing:-0.320px;color:#1e1e1e">Tastenkürzel</div>
<div class="t" id="t52" style="left:464.70px;top:205.10px;font-size:8.91px;letter-spacing:-0.261px;color:#1e1e1e">Text</div>
<div class="t" id="t53" style="left:208.50px;top:402.70px;font-size:9.4px;letter-spacing:-0.213px;color:#1e1e1e">Berechtigungen</div>
<div class="t" id="t54" style="left:239.90px;top:422.60px;font-size:9.4px;letter-spacing:-0.077px;color:#1e1e1e">Umweltamt</div>
<div class="t" id="t55" style="left:254.50px;top:437.00px;font-size:8.87px;letter-spacing:-0.259px;color:#1e1e1e">Best</div>
<div class="t" id="t56" style="left:254.50px;top:451.10px;font-size:9.4px;letter-spacing:-0.169px;color:#1e1e1e">Huber</div>
<div class="t" id="t57" style="left:254.50px;top:465.10px;font-size:8.87px;letter-spacing:-0.259px;color:#1e1e1e">Paul</div>
<div class="t" id="t58" style="left:240.50px;top:479.70px;font-size:8.92px;letter-spacing:-0.257px;color:#1e1e1e">Best</div>
<div class="t" id="t59" style="left:4.00px;top:518.10px;font-size:8.78px;letter-spacing:-0.254px;color:#1e1e1e">SCHULUNGSERVER2 | GeoAS64_Management</div>
<div class="t" id="t60" style="left:652.50px;top:518.10px;font-size:9.4px;letter-spacing:-0.255px;color:#1e1e1e">Project Management Version 8.5.2.1</div>
<div class="a" style="left:798.3px;top:6px;width:0.8px;height:523px;background:#5f9cf0"></div>
<div id="frame"></div>
</div>
</body></html>
